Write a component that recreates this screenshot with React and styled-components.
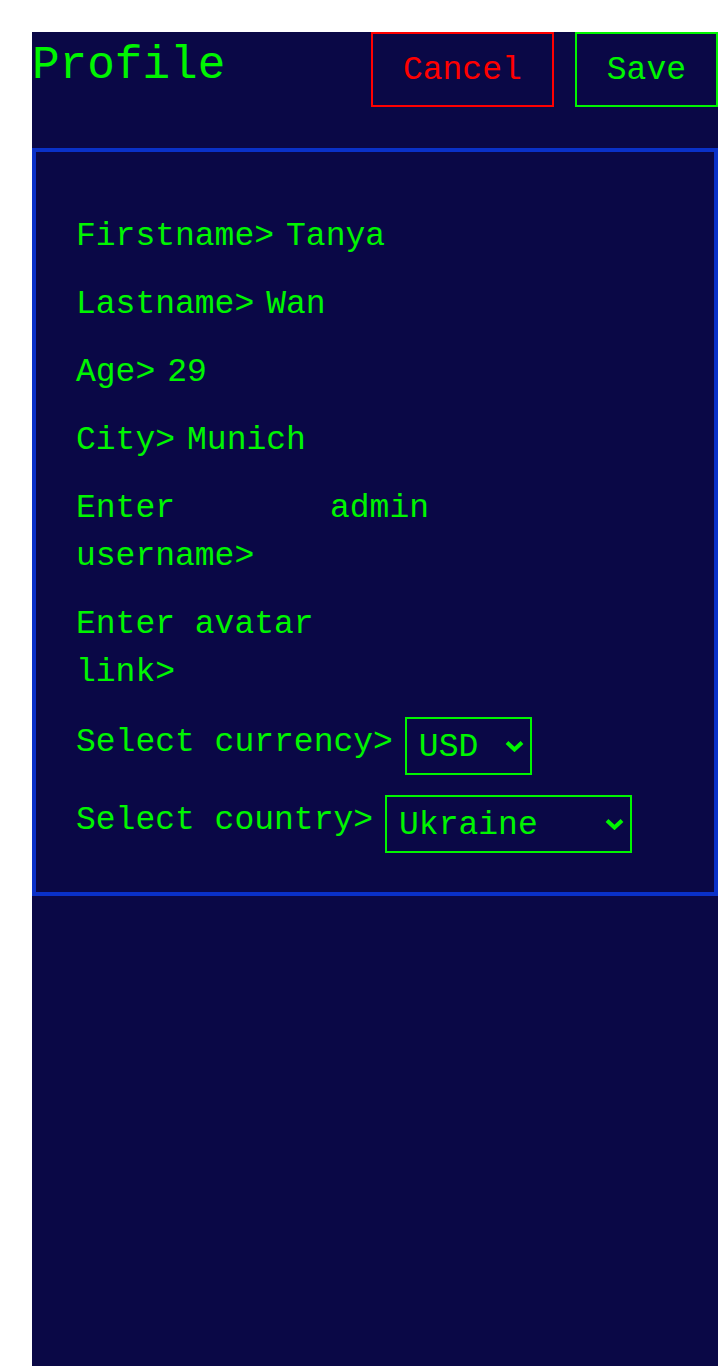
import styled, { createGlobalStyle } from 'styled-components';
import { useState } from 'react';

const green = '#00f500';
const mono = "'Liberation Mono', 'DejaVu Sans Mono', monospace";

const GlobalStyle = createGlobalStyle`
  html, body {
    margin: 0;
    background: #ffffff;
  }

  body {
    font-family: ${mono};
  }
`;

const Page = styled.div`
  display: flex;
  min-height: 100vh;
  padding: 32px 0 0 32px;
  box-sizing: border-box;
`;

const Screen = styled.main`
  flex: 1;
  background: #0a0846;
  color: ${green};
`;

const Header = styled.header`
  display: flex;
  justify-content: space-between;
  align-items: flex-start;
  margin-bottom: 41px;
`;

const Title = styled.h1`
  margin: 0;
  font-size: 46px;
  font-weight: 400;
  line-height: 69px;
`;

const Actions = styled.div`
  display: flex;
  gap: 21px;
`;

const Button = styled.button`
  height: 75px;
  padding: 2px 30px 0;
  border: 2px solid ${(p) => p.$color};
  background: transparent;
  color: ${(p) => p.$color};
  font-family: ${mono};
  font-size: 33px;
  cursor: pointer;
`;

const Card = styled.section`
  display: flex;
  flex-direction: column;
  gap: 20px;
  border: 4px solid #0a31c8;
  padding: 61px 40px 39px;
`;

const Row = styled.div`
  display: flex;
  align-items: flex-start;
  gap: 12px;
  font-size: 33px;
  line-height: 48px;
`;

const Label = styled.span`
  max-width: ${(p) => (p.$nowrap ? 'none' : '242px')};
  white-space: ${(p) => (p.$nowrap ? 'nowrap' : 'normal')};
  padding-top: ${(p) => (p.$nowrap ? '2px' : '0')};
`;

const SelectWrap = styled.div`
  position: relative;
  width: ${(p) => p.$width}px;
`;

const Select = styled.select`
  appearance: none;
  width: 100%;
  height: 58px;
  padding: 2px 40px 0 12px;
  border: 2px solid ${green};
  border-radius: 0;
  background: transparent;
  color: ${green};
  font-family: ${mono};
  font-size: 33px;
  outline: none;

  option {
    background: #0a0846;
  }
`;

const Chevron = styled.svg`
  position: absolute;
  right: 8px;
  top: 50%;
  transform: translateY(-50%);
  pointer-events: none;
`;

const fields = [
  { label: 'Firstname>', value: 'Tanya' },
  { label: 'Lastname>', value: 'Wan' },
  { label: 'Age>', value: '29' },
  { label: 'City>', value: 'Munich' },
  { label: 'Enter username>', value: 'admin' },
  { label: 'Enter avatar link>', value: '' },
];

const selects = [
  { label: 'Select currency>', options: ['USD', 'EUR', 'UAH'], width: 127 },
  { label: 'Select country>', options: ['Ukraine', 'Germany', 'Poland'], width: 247 },
];

const ArrowDown = () => (
  <Chevron width="19" height="12" viewBox="0 0 19 12">
    <polyline points="2,2.5 9.5,9.5 17,2.5" fill="none" stroke={green} strokeWidth="4" />
  </Chevron>
);

const App = () => {
  const [values, setValues] = useState({ 'Select currency>': 'USD', 'Select country>': 'Ukraine' });

  return (
    <Page>
      <GlobalStyle />
      <Screen>
        <Header>
          <Title>Profile</Title>
          <Actions>
            <Button $color="#ff0000">Cancel</Button>
            <Button $color={green}>Save</Button>
          </Actions>
        </Header>

        <Card>
          {fields.map((f) => (
            <Row key={f.label}>
              <Label>{f.label}</Label>
              <span>{f.value}</span>
            </Row>
          ))}

          {selects.map((s) => (
            <Row key={s.label}>
              <Label $nowrap>{s.label}</Label>
              <SelectWrap $width={s.width}>
                <Select
                  value={values[s.label]}
                  onChange={(e) => setValues((prev) => ({ ...prev, [s.label]: e.target.value }))}
                >
                  {s.options.map((o) => (
                    <option key={o}>{o}</option>
                  ))}
                </Select>
                <ArrowDown />
              </SelectWrap>
            </Row>
          ))}
        </Card>
      </Screen>
    </Page>
  );
};

export default App;
